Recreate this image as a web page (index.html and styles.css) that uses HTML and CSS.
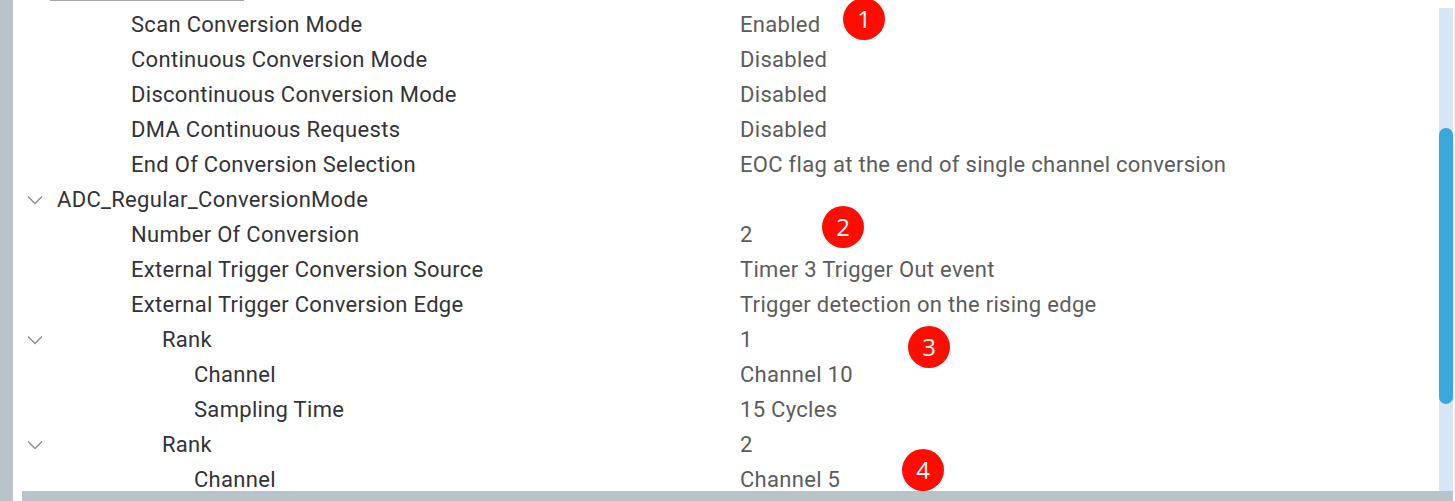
FILE: index.html
```html
<!DOCTYPE html>
<html>
<head>
<meta charset="utf-8">
<link rel="stylesheet" href="styles.css">
</head>
<body>
<div class="app">
  <div class="side"></div>
  <div class="main">
    <div class="content">
      <div class="tree">
        <div class="topline"></div>
        <div class="row"><span class="chev"></span><span class="label l1">Scan Conversion Mode</span><span class="value">Enabled</span></div>
        <div class="row"><span class="chev"></span><span class="label l1">Continuous Conversion Mode</span><span class="value">Disabled</span></div>
        <div class="row"><span class="chev"></span><span class="label l1">Discontinuous Conversion Mode</span><span class="value">Disabled</span></div>
        <div class="row"><span class="chev"></span><span class="label l1">DMA Continuous Requests</span><span class="value">Disabled</span></div>
        <div class="row"><span class="chev"></span><span class="label l1">End Of Conversion Selection</span><span class="value">EOC flag at the end of single channel conversion</span></div>
        <div class="row"><span class="chev"><svg width="16" height="10" viewBox="0 0 16 10"><path d="M1 1.5 L8 8.5 L15 1.5" fill="none" stroke="#8a8a8a" stroke-width="1.3"/></svg></span><span class="label l0">ADC_Regular_ConversionMode</span><span class="value"></span></div>
        <div class="row"><span class="chev"></span><span class="label l1">Number Of Conversion</span><span class="value">2</span></div>
        <div class="row"><span class="chev"></span><span class="label l1">External Trigger Conversion Source</span><span class="value">Timer 3 Trigger Out event</span></div>
        <div class="row"><span class="chev"></span><span class="label l1">External Trigger Conversion Edge</span><span class="value">Trigger detection on the rising edge</span></div>
        <div class="row"><span class="chev"><svg width="16" height="10" viewBox="0 0 16 10"><path d="M1 1.5 L8 8.5 L15 1.5" fill="none" stroke="#8a8a8a" stroke-width="1.3"/></svg></span><span class="label l2">Rank</span><span class="value">1</span></div>
        <div class="row"><span class="chev"></span><span class="label l3">Channel</span><span class="value">Channel 10</span></div>
        <div class="row"><span class="chev"></span><span class="label l3">Sampling Time</span><span class="value">15 Cycles</span></div>
        <div class="row"><span class="chev"><svg width="16" height="10" viewBox="0 0 16 10"><path d="M1 1.5 L8 8.5 L15 1.5" fill="none" stroke="#8a8a8a" stroke-width="1.3"/></svg></span><span class="label l2">Rank</span><span class="value">2</span></div>
        <div class="row"><span class="chev"></span><span class="label l3">Channel</span><span class="value">Channel 5</span></div>
      </div>
      <div class="vscroll"><div class="track"><div class="thumb"></div></div></div>
    </div>
    <div class="hscroll"></div>
    <span class="badge b1">1</span>
    <span class="badge b2">2</span>
    <span class="badge b3">3</span>
    <span class="badge b4">4</span>
  </div>
</div>
</body>
</html>
```
FILE: styles.css
```css
html, body {
  margin: 0;
  padding: 0;
  background: #ffffff;
}
body {
  width: 1455px;
  height: 501px;
  overflow: hidden;
  font-family: Roboto, "Liberation Sans", sans-serif;
}
.app {
  display: flex;
  height: 501px;
}
.side {
  width: 13px;
  background: #b9c4ca;
  flex: none;
}
.main {
  flex: 1;
  display: flex;
  flex-direction: column;
  position: relative;
  min-width: 0;
}
.content {
  flex: 1;
  display: flex;
  min-height: 0;
}
.tree {
  flex: 1;
  overflow: hidden;
}
.topline {
  margin-left: 37px;
  width: 194px;
  height: 1px;
  background: #a6a6a6;
  margin-bottom: 6px;
}
.row {
  display: grid;
  grid-template-columns: 44px 683px 1fr;
  height: 35px;
  align-items: center;
  font-size: 22px;
  letter-spacing: 0.3px;
  white-space: nowrap;
}
.chev {
  display: flex;
  align-items: center;
  padding-left: 14px;
  height: 35px;
}
.label {
  color: #333338;
}
.l0 { padding-left: 0; }
.l1 { padding-left: 74px; }
.l2 { padding-left: 105px; }
.l3 { padding-left: 137px; }
.value {
  color: #5c5c5c;
}
.vscroll {
  width: 14px;
  margin-right: 2px;
  padding-top: 8px;
  flex: none;
  display: flex;
}
.track {
  flex: 1;
  background: #d6e6f4;
  padding-top: 120px;
}
.thumb {
  height: 276px;
  background: #3aa8dc;
  border-radius: 7px;
}
.hscroll {
  height: 10px;
  margin-left: 9px;
  margin-right: 2px;
  background: #b9c4ca;
  flex: none;
}
.badge {
  position: absolute;
  width: 42px;
  height: 42px;
  border-radius: 50%;
  background: #fe0d00;
  color: #ffffff;
  font-family: "Open Sans", "Noto Sans", sans-serif;
  font-size: 24px;
  line-height: 42px;
  text-align: center;
}
.b1 { left: 830px; top: -2px; }
.b2 { left: 809px; top: 206px; }
.b3 { left: 895px; top: 326px; }
.b4 { left: 889px; top: 449px; }
```
